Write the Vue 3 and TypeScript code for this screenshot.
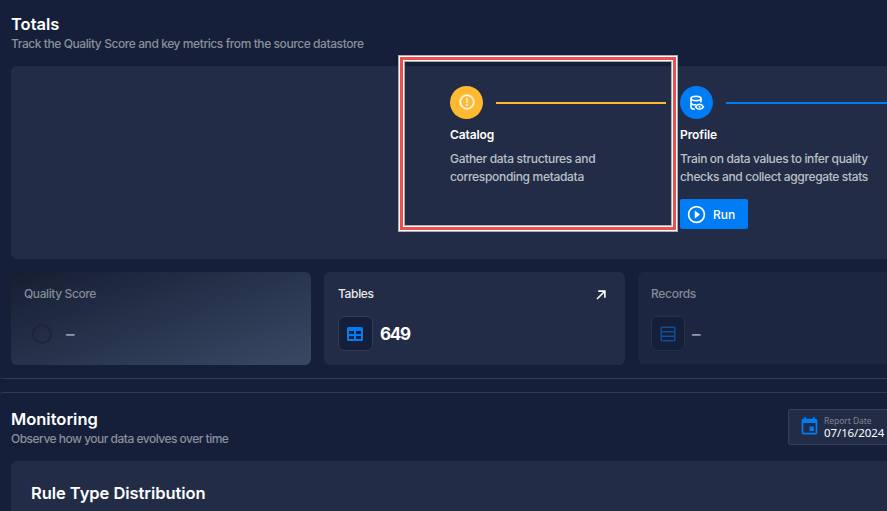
<script setup lang="ts">
interface Step {
  key: 'catalog' | 'profile'
  title: string
  lines: string[]
  runnable: boolean
}

const steps: Step[] = [
  {
    key: 'catalog',
    title: 'Catalog',
    lines: ['Gather data structures and', 'corresponding metadata'],
    runnable: false,
  },
  {
    key: 'profile',
    title: 'Profile',
    lines: ['Train on data values to infer quality', 'checks and collect aggregate stats'],
    runnable: true,
  },
]
</script>

<template>
  <main class="page">
    <section class="panel totals">
      <h2 class="heading totals-heading">Totals</h2>
      <p class="subtitle totals-subtitle">Track the Quality Score and key metrics from the source datastore</p>

      <div class="flow">
        <article v-for="step in steps" :key="step.key" class="step" :class="step.key">
          <div class="track">
            <span class="badge">
              <svg v-if="step.key === 'catalog'" class="alert" viewBox="0 0 24 24">
                <path d="M11 15h2v2h-2v-2m0-8h2v6h-2V7m1-5C6.47 2 2 6.5 2 12a10 10 0 0 0 10 10 10 10 0 0 0 10-10A10 10 0 0 0 12 2m0 18a8 8 0 0 1-8-8 8 8 0 0 1 8-8 8 8 0 0 1 8 8 8 8 0 0 1-8 8z" />
              </svg>
              <svg v-else class="database" viewBox="0 0 16 16">
                <g fill="none" stroke="currentColor" stroke-width="1.6">
                  <ellipse cx="7" cy="3.5" rx="5" ry="2.1" />
                  <path d="M2 3.5v8.7c0 1 1.6 1.8 3.8 2M12 3.5v4M2 7.7c0 1.3 2.2 2.1 5.3 2.1" />
                  <path d="M6.6 11.8c1-1.7 2.2-2.5 3.9-2.5s2.9.8 3.9 2.5c-1 1.7-2.2 2.5-3.9 2.5s-2.9-.8-3.9-2.5z" />
                </g>
                <circle cx="10.5" cy="11.8" r="1" fill="currentColor" />
              </svg>
            </span>
            <span class="connector"></span>
          </div>
          <h3 class="step-title">{{ step.title }}</h3>
          <p class="step-text">
            <span v-for="line in step.lines" :key="line">{{ line }}</span>
          </p>
          <button v-if="step.runnable" class="run" type="button">
            <svg viewBox="0 0 24 24">
              <path d="M12 20c-4.41 0-8-3.59-8-8s3.59-8 8-8 8 3.59 8 8-3.59 8-8 8m0-18A10 10 0 0 0 2 12a10 10 0 0 0 10 10 10 10 0 0 0 10-10A10 10 0 0 0 12 2m-2 14.5 6-4.5-6-4.5v9z" />
            </svg>
            <span>Run</span>
          </button>
        </article>
        <div class="highlight"></div>
      </div>

      <div class="cards">
        <article class="card quality">
          <h4 class="card-title quality-title">Quality Score</h4>
          <div class="metric">
            <span class="ring"></span>
            <span class="value">–</span>
          </div>
        </article>
        <article class="card">
          <header class="card-head">
            <h4 class="card-title">Tables</h4>
            <svg class="arrow" viewBox="0 0 10 10">
              <path d="M1 9 8.3 1.7M2.3 1.1H8.9V7.7" />
            </svg>
          </header>
          <div class="metric">
            <span class="tile">
              <svg viewBox="0 0 16 14">
                <path fill-rule="evenodd" d="M1.500 0h13A1.500 1.500 0 0 1 16 1.500v11a1.500 1.500 0 0 1-1.500 1.500h-13A1.500 1.500 0 0 1 0 12.500v-11A1.500 1.500 0 0 1 1.500 0zM2 4v3h5V4zM9 4v3h5V4zM2 9v3h5V9zM9 9v3h5V9z" />
              </svg>
            </span>
            <span class="value number">649</span>
          </div>
        </article>
        <article class="card records">
          <h4 class="card-title records-title">Records</h4>
          <div class="metric">
            <span class="tile">
              <svg viewBox="0 0 16 16">
                <path fill-rule="evenodd" d="M1.800.5h12.400a1.300 1.300 0 0 1 1.300 1.300v12.400a1.300 1.300 0 0 1-1.300 1.300H1.800A1.300 1.300 0 0 1 .5 14.200V1.800A1.300 1.300 0 0 1 1.800.5zM2 2v3h12V2zM2 6.500v3h12v-3zM2 11v3h12v-3z" />
              </svg>
            </span>
            <span class="value">–</span>
          </div>
        </article>
      </div>
    </section>

    <section class="panel monitoring">
      <header class="monitoring-head">
        <div>
          <h2 class="heading monitoring-heading">Monitoring</h2>
          <p class="subtitle monitoring-subtitle">Observe how your data evolves over time</p>
        </div>
        <div class="date-field">
          <svg viewBox="0 0 24 24">
            <path d="M19 19H5V8h14m-3-7v2H8V1H6v2H5c-1.11 0-2 .89-2 2v14a2 2 0 0 0 2 2h14a2 2 0 0 0 2-2V5a2 2 0 0 0-2-2h-1V1m-1 11h-5v5h5v-5z" />
          </svg>
          <div class="date-text">
            <span class="date-label">Report Date</span>
            <span class="date-value">07/16/2024</span>
          </div>
        </div>
      </header>
      <div class="chart-card">
        <h3 class="chart-title">Rule Type Distribution</h3>
      </div>
    </section>
  </main>
</template>

<style>
body {
  background: #151f39;
  overflow: hidden;
}
</style>

<style scoped>
.page {
  box-sizing: border-box;
  display: flex;
  flex-direction: column;
  gap: 13px;
  width: 887px;
  height: 511px;
  overflow: hidden;
  background: #151f39;
  color: #fff;
  font-family: Inter, "Liberation Sans", sans-serif;
}

h2, h3, h4, p {
  margin: 0;
  font-weight: 400;
  white-space: nowrap;
}

.panel {
  box-sizing: border-box;
  flex: none;
  width: 887px;
  padding-left: 11px;
}

.totals {
  height: 379px;
  padding-top: 14px;
  border-bottom: 1px solid #303950;
  border-bottom-left-radius: 3px;
}

.heading {
  font-size: 16.5px;
  line-height: 20px;
  font-weight: 600;
}

.totals-heading { letter-spacing: 0; }
.monitoring-heading { letter-spacing: 0; }

.subtitle {
  margin-top: 1px;
  font-size: 12px;
  line-height: 18px;
  font-weight: 500;
  color: #8a8f9c;
}

.totals-subtitle { letter-spacing: -0.42px; }
.monitoring-subtitle { letter-spacing: -0.51px; }

.flow {
  position: relative;
  box-sizing: border-box;
  display: flex;
  gap: 14px;
  height: 193px;
  margin-top: 13px;
  padding: 20px 0 0 439px;
  border-radius: 6px 0 0 6px;
  background: #222c46;
}

.step {
  display: flex;
  flex: none;
  flex-direction: column;
  align-items: flex-start;
  width: 216px;
}

.track {
  display: flex;
  align-items: center;
  gap: 13px;
  width: 100%;
}

.badge {
  display: flex;
  flex: none;
  align-items: center;
  justify-content: center;
  width: 33px;
  height: 33px;
  border-radius: 50%;
}

.connector {
  flex: 1;
  height: 2px;
  margin-top: 1px;
}

.catalog .badge,
.catalog .connector { background: #ffb931; }

.profile .badge,
.profile .connector { background: #007df5; }

.alert {
  width: 18px;
  height: 18px;
  margin-bottom: 2px;
  fill: #fff2d9;
  stroke: #fff2d9;
  stroke-width: 0.5;
}

.database {
  width: 16px;
  height: 16px;
  color: #fff;
}

.step-title {
  margin-top: 7px;
  font-size: 12px;
  line-height: 18px;
  font-weight: 600;
  letter-spacing: -0.1px;
}

.step-text {
  display: flex;
  flex-direction: column;
  margin-top: 6px;
  font-size: 12px;
  line-height: 18px;
  font-weight: 450;
  letter-spacing: -0.36px;
  color: #bcc0c8;
}

.catalog .step-text { letter-spacing: -0.32px; }

.run {
  display: flex;
  align-items: center;
  gap: 6px;
  width: 68px;
  height: 30px;
  margin-top: 13px;
  padding: 0 0 0 6px;
  border: 0;
  border-radius: 2px;
  background: #007df5;
  color: #fff;
  font: 500 12px Inter, sans-serif;
}

.run svg {
  width: 21px;
  height: 21px;
  fill: currentColor;
}

.highlight {
  position: absolute;
  top: -11px;
  left: 387px;
  box-sizing: border-box;
  width: 280px;
  height: 177px;
  border: 1px solid #a9adb7;
  box-shadow: inset 0 0 0 1px #fff, inset 0 0 0 4px #ef4e4b, inset 0 0 0 5px #fff, inset 0 0 0 6px #a9adb7;
}

.cards {
  display: flex;
  gap: 13px;
  margin-top: 13px;
}

.card {
  box-sizing: border-box;
  flex: none;
  width: 301px;
  height: 93px;
  padding: 13px 14px 0;
  border-radius: 6px;
  background: #222c46;
}

.quality {
  width: 300px;
  padding-left: 13px;
  background: linear-gradient(160deg, #161f30 0%, #1f2941 27%, #2d3a54 65%, #3b4865 100%);
}

.records {
  height: 92px;
  padding-left: 13px;
  background: #1c2640;
}

.card-head {
  display: flex;
  justify-content: space-between;
}

.card-title {
  font-size: 12px;
  line-height: 18px;
  font-weight: 450;
  letter-spacing: -0.35px;
  color: #e9eaed;
}

.quality-title, .records-title { color: #858a98; }
.records-title { letter-spacing: -0.3px; }
.quality-title { letter-spacing: -0.4px; }

.arrow {
  width: 10px;
  height: 10px;
  margin: 5px 5px 0 0;
  fill: none;
  stroke: #fff;
  stroke-width: 1.6;
}

.metric {
  display: flex;
  align-items: center;
  height: 35px;
  margin-top: 13px;
}

.ring {
  box-sizing: border-box;
  width: 20px;
  height: 20px;
  margin: 0 14px 0 8px;
  border: 2px solid #1f2537;
  border-radius: 50%;
}

.tile {
  box-sizing: border-box;
  display: flex;
  align-items: center;
  justify-content: center;
  width: 35px;
  height: 35px;
  margin-right: 7px;
  border: 1px solid #333c54;
  border-radius: 6px;
  background: #151f39;
}

.tile svg {
  width: 16px;
  height: 14px;
  margin-right: 1px;
  fill: #007df5;
}

.records .tile {
  width: 34px;
  border-color: #252f49;
}

.records .tile svg {
  height: 16px;
  margin-right: 0;
  fill: #0c4f98;
}

.value {
  font-size: 17px;
  line-height: 24px;
  font-weight: 600;
  color: #949aa5;
}

.number {
  font-weight: 700;
  letter-spacing: -1.3px;
  color: #fff;
}

.monitoring {
  height: 140px;
  padding-top: 16px;
  border-top: 1px solid #303950;
  border-top-left-radius: 3px;
}

.monitoring-head {
  display: flex;
  justify-content: space-between;
  height: 52px;
}

.date-field {
  box-sizing: border-box;
  display: flex;
  width: 99px;
  height: 36px;
  padding: 6px 0 0 10px;
  border: 1px solid #363f57;
  border-right: 0;
  border-radius: 3px 0 0 3px;
  background: #222c46;
}

.date-field svg {
  flex: none;
  width: 21px;
  height: 21px;
  margin-right: 4px;
  fill: #007df5;
}

.date-text {
  display: flex;
  flex-direction: column;
  font-family: "Noto Sans", sans-serif;
  white-space: nowrap;
}

.date-label {
  font-size: 8.5px;
  line-height: 10px;
  letter-spacing: -0.05px;
  color: #80858f;
}

.date-value {
  font-size: 11.5px;
  line-height: 14px;
  letter-spacing: -0.1px;
}

.chart-card {
  height: 72px;
  padding: 20px 0 0 20px;
  border-radius: 6px 0 0 0;
  background: #222c46;
}

.chart-title {
  font-size: 16.5px;
  line-height: 24px;
  font-weight: 600;
  letter-spacing: -0.05px;
}
</style>
